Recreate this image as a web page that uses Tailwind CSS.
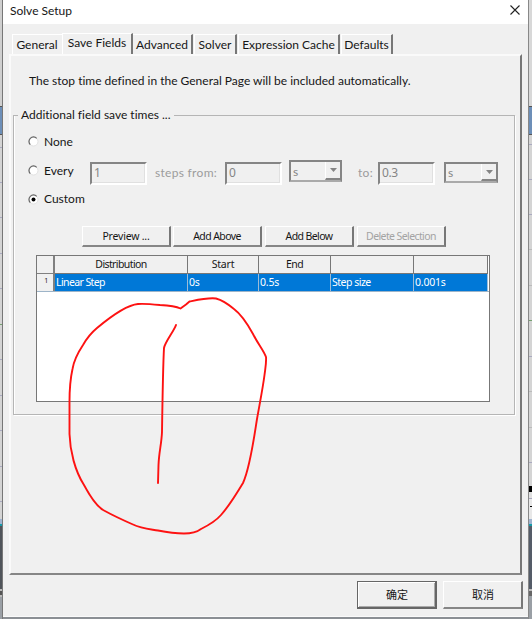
<!DOCTYPE html>
<html lang="zh-CN">
<head>
<meta charset="utf-8">
<title>Solve Setup</title>
<script src="https://cdn.jsdelivr.net/npm/@tailwindcss/browser@4"></script>
</head>
<body class="overflow-hidden">
<div class="relative flex h-[619px] w-[532px] overflow-hidden whitespace-nowrap bg-[#8b8f94] font-['Lato','Noto_Sans_CJK_SC',sans-serif] text-[12px] leading-[16px] text-[#161616] [font-variant-ligatures:none]">

  <!-- application window behind, left edge -->
  <div class="flex w-[3px] shrink-0 flex-col border-r border-[#777]">
    <div class="h-[106px] bg-[#cfcfcf]"></div>
    <div class="h-[29px] border-y border-[#555] bg-[#6d8fb8]"></div>
    <div class="h-[13px] border-b border-[#aaaac0] bg-[#d4d4d4]"></div>
    <div class="h-[35px] border-b border-[#aaaac0] bg-[#d4d4d4]"></div>
    <div class="h-[35px] border-b border-[#aaaac0] bg-[#d4d4d4]"></div>
    <div class="h-[36px] border-b border-[#aaaac0] bg-[#d4d4d4]"></div>
    <div class="h-[35px] border-b border-[#aaaac0] bg-[#d4d4d4]"></div>
    <div class="h-[36px] border-b border-[#75a070] bg-[#d4d4d4]"></div>
    <div class="h-[35px] border-b border-[#aaaac0] bg-[#d4d4d4]"></div>
    <div class="h-[36px] border-b border-[#aaaac0] bg-[#d4d4d4]"></div>
    <div class="h-[35px] border-b border-[#aaaac0] bg-[#d4d4d4]"></div>
    <div class="h-[36px] border-b border-[#aaaac0] bg-[#d4d4d4]"></div>
    <div class="h-[35px] border-b border-[#aaaac0] bg-[#d4d4d4]"></div>
    <div class="h-[17px] bg-[#d4d4d4]"></div>
    <div class="h-[7px] border-b-2 border-[#159aa8] bg-[#9fb4d0]"></div>
    <div class="h-[63px] bg-[#50545a]"></div>
    <div class="h-[8px] border-y-2 border-[#bbb] bg-[#555]"></div>
    <div class="flex-1 bg-[#9a9fa5]"></div>
  </div>

  <!-- dialog -->
  <div class="flex h-[617px] w-[525px] shrink-0 flex-col border-b border-[#fafafa] bg-[#f0f0f0]">
    <div class="flex h-6 shrink-0 items-center justify-between bg-white pl-[7px] pr-[8px]">
      <span class="-mt-[3px]">Solve Setup</span>
      <svg class="-mt-[4px]" width="10" height="10" viewBox="0 0 10 10" fill="none" stroke="#222" stroke-width="1.1"><path d="M.5.5l9 9M9.500.5l-9 9"/></svg>
    </div>

    <!-- tabs -->
    <div class="flex h-[30px] shrink-0 items-end pl-[9px]">
      <div class="flex h-5 w-[50px] items-center justify-center border-l border-t border-white pr-px"><span>General</span></div>
      <div class="flex h-[21px] w-[71px] justify-center border-l border-r-2 border-t border-white border-r-[#777] pt-px"><span>Save Fields</span></div>
      <div class="flex h-5 w-[60px] items-center justify-center border-r-2 border-t border-white border-r-[#777]"><span>Advanced</span></div>
      <div class="ml-px flex h-5 w-[43px] items-center justify-center border-l border-r-2 border-t border-white border-r-[#777]"><span>Solver</span></div>
      <div class="ml-px flex h-5 w-[102px] items-center justify-center border-l border-r-2 border-t border-white border-r-[#777]"><span>Expression Cache</span></div>
      <div class="ml-px flex h-5 w-[52px] items-center justify-center border-l border-r-2 border-t border-white border-r-[#777]"><span>Defaults</span></div>
    </div>

    <!-- page -->
    <div class="ml-[6px] h-[521px] w-[513px] shrink-0 border-2 border-b-[#868686] border-l-[#fafafa] border-r-[#777] border-t-[#fafafa] pl-[2px]">
      <p class="pl-[16px] pt-[17px]">The stop time defined in the General Page will be included automatically.</p>

      <fieldset class="mt-[18px] h-[308px] w-[502px] border border-[#b5b5b5] shadow-[1px_1px_0_#fff,inset_1px_0_0_#fff]">
        <legend class="ml-[4px] px-[3px]">Additional field save times ...</legend>

        <div class="flex h-[27px] items-center pl-[14px] pt-[10px]">
          <svg width="11" height="11" viewBox="0 0 11 11" fill="none"><circle cx="5.500" cy="5.500" r="4.500" fill="#fff" stroke="#e2e2e2"/><path d="M2.300 8.700A4.500 4.500 0 0 1 8.700 2.300" stroke="#666" stroke-width="1.200"/></svg>
          <span class="ml-[5px]">None</span>
        </div>

        <div class="mt-[10px] flex h-[26px] items-start pl-[14px]">
          <svg class="mt-[5px]" width="11" height="11" viewBox="0 0 11 11" fill="none"><circle cx="5.500" cy="5.500" r="4.500" fill="#fff" stroke="#e2e2e2"/><path d="M2.300 8.700A4.500 4.500 0 0 1 8.700 2.300" stroke="#666" stroke-width="1.200"/></svg>
          <span class="ml-[5px] mt-[3px] w-[46px]">Every</span>
          <div class="mt-[2px] h-[23px] w-[57px] border-2 border-b-white border-l-[#858585] border-r-white border-t-[#858585] pl-[2px] pt-px font-['Noto_Sans',sans-serif] tracking-[-0.4px] text-[#858585] shadow-[inset_-1px_-1px_0_#e0e0e0]">1</div>
          <span class="ml-[8px] mt-[5px] w-[70px] tracking-[0.3px] text-[#9c9c9c]">steps from:</span>
          <div class="mt-[2px] h-[23px] w-[57px] border-2 border-b-white border-l-[#858585] border-r-white border-t-[#858585] pl-[2px] pt-px font-['Noto_Sans',sans-serif] tracking-[-0.4px] text-[#858585] shadow-[inset_-1px_-1px_0_#e0e0e0]">0</div>
          <div class="ml-[7px] flex h-[22px] w-[53px] border-2 border-[#858585] border-b-[#aaa] pl-[2px] text-[#858585]">
            <span class="mt-[2px] flex-1">s</span>
            <span class="flex w-[15px] items-center justify-center border-b-2 border-l border-b-[#858585] border-l-white"><svg width="7" height="4" viewBox="0 0 7 4"><path d="M0 0h7L3.500 4z" fill="#858585"/></svg></span>
          </div>
          <span class="ml-[16px] mt-[5px] w-[20px] tracking-[0.3px] text-[#9c9c9c]">to:</span>
          <div class="mt-[2px] h-[23px] w-[57px] border-2 border-b-white border-l-[#858585] border-r-white border-t-[#858585] pl-[2px] pt-px font-['Noto_Sans',sans-serif] tracking-[-0.4px] text-[#858585] shadow-[inset_-1px_-1px_0_#e0e0e0]">0.3</div>
          <div class="ml-[9px] mt-[2px] flex h-[21px] w-[54px] border-2 border-[#858585] border-b-[#aaa] pl-[2px] text-[#858585]">
            <span class="mt-px flex-1">s</span>
            <span class="flex w-[15px] items-center justify-center border-b-2 border-l border-b-[#858585] border-l-white"><svg width="7" height="4" viewBox="0 0 7 4"><path d="M0 0h7L3.500 4z" fill="#858585"/></svg></span>
          </div>
        </div>

        <div class="mt-[3px] flex h-[20px] items-center pl-[14px]">
          <svg width="11" height="11" viewBox="0 0 11 11" fill="none"><circle cx="5.500" cy="5.500" r="4.500" fill="#fff" stroke="#e2e2e2"/><path d="M2.300 8.700A4.500 4.500 0 0 1 8.700 2.300" stroke="#666" stroke-width="1.200"/><circle cx="5.500" cy="5.500" r="2" fill="#000"/></svg>
          <span class="ml-[5px]">Custom</span>
        </div>

        <div class="mt-[17px] flex h-[21px] pl-[68px] font-['Noto_Sans',sans-serif] text-[10.5px] leading-[18px] tracking-[-0.6px]">
          <div class="w-[89px] border border-b-2 border-r-2 border-white border-b-[#868686] border-r-[#777] text-center tracking-[-0.2px]">Preview ...</div>
          <div class="ml-[2px] w-[89px] border border-b-2 border-r-2 border-white border-b-[#868686] border-r-[#777] text-center">Add Above</div>
          <div class="ml-[3px] w-[89px] border border-b-2 border-r-2 border-white border-b-[#868686] border-r-[#777] text-center">Add Below</div>
          <div class="ml-[3px] w-[89px] border border-b-2 border-r-2 border-white border-b-[#868686] border-r-[#777] text-center text-[#a3a3a3]">Delete Selection</div>
        </div>

        <div class="ml-[22px] mt-[8px] h-[147px] w-[454px] border border-[#777] bg-white font-['Noto_Sans',sans-serif] text-[10.5px] leading-[17px] tracking-[-0.6px]">
          <div class="grid h-[18px] grid-cols-[18px_133px_71px_72px_83px_74px] text-center">
            <div class="border-b border-r-2 border-[#808080] bg-[#f0f0f0]"></div>
            <div class="border-b border-r border-[#777] bg-[#f0f0f0]">Distribution</div>
            <div class="border-b border-r border-[#777] bg-[#f0f0f0] tracking-[-0.2px]">Start</div>
            <div class="border-b border-r border-[#777] bg-[#f0f0f0]">End</div>
            <div class="border-b border-r border-[#777] bg-[#f0f0f0]"></div>
            <div class="border-b border-r border-[#777] bg-[#f0f0f0]"></div>
          </div>
          <div class="grid h-[18px] grid-cols-[18px_133px_71px_72px_83px_74px] border-b border-[#9db4c8] text-white">
            <div class="border-r-2 border-[#808080] bg-[#f0f0f0] pl-[2px] text-center text-[7px] leading-[13px] text-[#222]">1</div>
            <div class="border-r border-[#9dbbd6] bg-[#0078d7] pl-px">Linear Step</div>
            <div class="border-r border-[#9dbbd6] bg-[#0078d7] pl-px tracking-[-0.2px]">0s</div>
            <div class="border-r border-[#9dbbd6] bg-[#0078d7] pl-px tracking-[-0.2px]">0.5s</div>
            <div class="border-r border-[#9dbbd6] bg-[#0078d7] pl-px tracking-[-0.5px]">Step size</div>
            <div class="border-r border-[#9dbbd6] bg-[#0078d7] pl-px tracking-[-0.2px]">0.001s</div>
          </div>
        </div>
      </fieldset>
    </div>

    <!-- dialog buttons -->
    <div class="mt-[6px] flex justify-end gap-[6px] pr-[5px] font-['Noto_Sans_CJK_SC',sans-serif] text-[11px] leading-[25px]">
      <div class="h-[28px] w-[80px] border border-b-2 border-r-2 border-[#666] pl-px text-center shadow-[inset_1px_1px_0_#fff,inset_-1px_-1px_0_#aaa]">确定</div>
      <div class="h-[28px] w-[80px] border border-b-2 border-r-2 border-white border-b-[#868686] border-r-[#777] pl-px text-center">取消</div>
    </div>
  </div>

  <!-- application window behind, right edge -->
  <div class="flex w-[4px] shrink-0 flex-col border-l border-[#888]">
    <div class="h-[106px] bg-[#d8d8d8]"></div>
    <div class="h-[29px] border-y border-[#555] bg-[#6d8fb8]"></div>
    <div class="h-[10px] border-b border-[#aaaac0] bg-[#d4d4d4]"></div>
    <div class="h-[35px] border-b border-[#aaaac0] bg-[#d4d4d4]"></div>
    <div class="h-[35px] border-b border-[#aaaac0] bg-[#d4d4d4]"></div>
    <div class="h-[35px] border-b border-[#bbb] bg-[#d4d4d4]"></div>
    <div class="h-[36px] border-b border-[#bbb] bg-[#d4d4d4]"></div>
    <div class="h-[35px] border-b border-[#75a070] bg-[#d4d4d4]"></div>
    <div class="h-[36px] border-b border-[#aaaac0] bg-[#d4d4d4]"></div>
    <div class="h-[35px] border-b border-[#bbb] bg-[#d4d4d4]"></div>
    <div class="h-[36px] border-b border-[#bbb] bg-[#d4d4d4]"></div>
    <div class="h-[35px] border-b border-[#aaaac0] bg-[#d4d4d4]"></div>
    <div class="h-[23px] bg-[#d4d4d4]"></div>
    <div class="h-[6px] bg-black"></div>
    <div class="h-[7px] border-b border-[#aaaac0] bg-[#e0e0e0]"></div>
    <div class="flex h-[20px] items-center justify-end bg-[#e8e8e8] pb-[6px]"><span class="h-px w-[2px] bg-black"></span></div>
    <div class="h-[7px] border-b-2 border-[#159aa8] bg-[#9fb4d0]"></div>
    <div class="h-[63px] bg-[#555c68]"></div>
    <div class="h-[7px] border-t-2 border-[#bbb] bg-[#666]"></div>
    <div class="flex-1 bg-[#9a9fa5]"></div>
  </div>

  <!-- red pen annotation -->
  <svg class="pointer-events-none absolute left-0 top-0" width="532" height="619" viewBox="0 0 532 619" fill="none" stroke="#fd1212" stroke-width="1.900" stroke-linecap="round" stroke-linejoin="round">
    <path d="M180.500 308.500C175 306 168 305.500 160 305C150 304 144 303.500 138 304C126 305 109 318 97 328C91 333 87 338 83 345C77 354 74 360 72.500 369C70.500 378 69.500 390 69.500 402V434C70 451 75 471 84 485C91 498 97 507 104 510.500C114 516 125 521 133 524.500C141 528.500 149 529 158 530.500C168 532.500 175 533.500 184 533.500C192 533.500 197 532 201 529C208 525.500 215 522 221 515C229 506 237 493 243 483C250 468 254 438 257 419C260 402 263 387 264.500 375C265.500 367 266.500 362 266 357C263.500 350 258 344 253 334C247 323 242 315 234 309C228 304 222 300 216 298.500C208 297.500 197 300 189.500 301.500L186 304.500Z"/>
    <path d="M176 325C174 331 165 342 164 348C163 366 162.500 398 162 432C161.500 444 159 452 158.500 465L158 483"/>
  </svg>
</div>
</body>
</html>
